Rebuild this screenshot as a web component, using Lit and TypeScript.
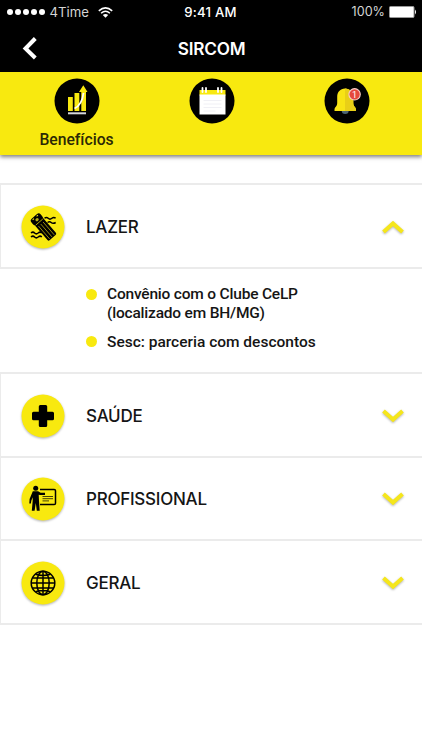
import { LitElement, html, css, svg } from "lit";
import { customElement } from "lit/decorators.js";

const statusDots = [0, 1, 2, 3, 4];

const wifi = html`<svg class="wifi" viewBox="0 0 15 11" width="15" height="11">
  <g fill="none" stroke="#fff" stroke-width="1.5">
    <path d="M.8 3.9Q7.5-2.1 14.2 3.9" /><path d="M3.1 6.2Q7.5 2.3 11.9 6.2" />
  </g>
  <path d="M4.8 8Q7.5 5.8 10.2 8L7.5 10.8z" fill="#fff" />
</svg>`;

const chart = html`<svg viewBox="0 0 46 46" width="46" height="46">
  <circle cx="23" cy="23" r="22.5" />
  <path d="M14 19h4.800v14H14zM20.500 15h4.800v18h-4.800zM27.300 14h-2.300l4.300-6.800L33.500 14H32v19h-4.700z" fill="#f8e90f" />
  <path d="M20.500 30.500C26 28 28.500 23 29.500 15" fill="none" stroke="#fff" stroke-width="1.800" />
  <path d="M14 35.300h18" stroke="#d7d8dc" stroke-width="2" />
</svg>`;

const calendar = html`<svg viewBox="0 0 46 46" width="46" height="46">
  <circle cx="23" cy="23" r="22.5" />
  <path d="M10.500 12h26v5.500h-26z" fill="#f8e90f" />
  <path d="M10.500 16.500h26v20h-26z" fill="#fff" />
  <path d="M14.500 22.500h18M14.500 26h18M14.500 29.500h18M14.500 33h12" stroke="#ececf2" stroke-width=".8" />
  <path d="M13.500 10v4M17 10v4M29 10v4M32.500 10v4" stroke="#fff" stroke-width="1.800" stroke-linecap="round" />
</svg>`;

const bell = html`<svg viewBox="0 0 46 46" width="46" height="46">
  <circle cx="23" cy="23" r="22.5" />
  <path d="M17.700 32.500h7a3.500 3.500 0 0 1-7 0z" fill="#4c6474" />
  <path d="M21 10.400c-4.800 0-7.800 3.700-7.800 8v6.600c0 3.500-2.700 4-2.700 6.700V33H32v-1.300c0-2.700-2.700-3.200-2.700-6.700v-6.600c0-4.300-3.300-8-8.300-8z" fill="#f8e415" />
  <path d="M21 10.400c5 0 8.300 3.700 8.300 8V25c0 3.500 2.700 4 2.700 6.700V33H21z" fill="#e9cf17" />
  <circle cx="30.600" cy="16.300" r="5.700" fill="#e5483d" stroke="#f6d0c8" stroke-width="1.100" />
  <text x="30.500" y="19.600" text-anchor="middle" font-family="Roboto, sans-serif" font-size="9" fill="#fff">1</text>
</svg>`;

const raft = svg`
  <g transform="translate(22.500 22) rotate(49) scale(1 1.180)">
    <path d="M-8-4.700H12.500a1.500 1.500 0 0 1 1.500 1.500v6.400a1.500 1.500 0 0 1-1.500 1.500H-8z" />
    <rect x="-14" y="-5.200" width="7.500" height="10.400" rx="2.500" />
    <path d="M-4-2.500H13M-4 .1H13M-4 2.700H13" stroke="#b8ad12" stroke-width=".7" />
    <path d="M-6.500-4v8" stroke="#f8e90f" stroke-width=".6" />
    <circle cx="-9.800" cy="0" r="1.500" fill="#b5aa15" />
    <path d="M-12.500-3v1.500M-12.500 1.500V3" stroke="#f8e90f" stroke-width="1" />
  </g>
  <g fill="none" stroke="#000" stroke-width="1.500">
    <path d="M23.500 13.300q2-1.700 3.700 0t3.700 0 3.700 0M26.500 17.500q2-1.500 3.700 0t4.500 0M10 28q2-1.700 3.600 0t3.600 0 3.600 0M10 32q2-1.700 3.600 0t3.600 0 3.600 0" />
  </g>`;

const cross = svg`<path d="M19.300 11h5.400a1.500 1.500 0 0 1 1.500 1.500v5.300h5.300a1.500 1.500 0 0 1 1.500 1.500v5.400a1.500 1.500 0 0 1-1.500 1.500h-5.300v5.300a1.500 1.500 0 0 1-1.500 1.500h-5.400a1.500 1.500 0 0 1-1.500-1.500v-5.300h-5.300a1.500 1.500 0 0 1-1.500-1.500v-5.400a1.500 1.500 0 0 1 1.500-1.500h5.300v-5.300a1.500 1.500 0 0 1 1.500-1.500z" />`;

const teacher = svg`
  <path d="M19 12.500h14.200q1.300 0 1.300 1.300v12.500q0 1.300-1.300 1.300H19" fill="none" stroke="#000" stroke-width="1.500" />
  <path d="M21.500 19.500h10.500M21.500 21.700h10.500M21.500 23.900h6.500" stroke="#453f08" stroke-width="1" />
  <circle cx="14.700" cy="11.300" r="2.500" />
  <path d="M11.800 14.300h5.300l2.500 1.500h4.400v2.100h-5l-1.300-.2.300 6 .7 10.100h-2.900l-1-7.800-1.200 7.800h-2.800l.9-10.100v-3.500l-1.400 3.500-.4 2.700H8.300l.3-4.500z" />`;

const globe = svg`<g fill="none" stroke="#000" stroke-width="1.500">
  <circle cx="22" cy="22" r="11.800" /><ellipse cx="22" cy="22" rx="6.200" ry="11.800" />
  <path d="M22 10v24M10.200 22h23.600M11.500 17h21M11.500 27h21M14.500 13.300q7.500 2.300 15 0M14.500 30.700q7.500-2.300 15 0" />
</g>`;

@customElement("app-root")
export class AppRoot extends LitElement {
  static styles = css`
    :host { display: block; height: 750px; overflow: hidden; background: #fff; color: #151515; font-family: Inter, "Liberation Sans", sans-serif; }
    * { box-sizing: border-box; }
    svg { display: block; flex: none; }
    .status { height: 24px; background: #000; color: #fff; display: grid; grid-template-columns: 1fr auto 1fr; align-items: center; padding: 0 5px 0 7px; font-size: 12.600px; line-height: 24px; }
    .carrier, .battery { display: flex; align-items: center; color: #d5d5d5; }
    .carrier { font-size: 13.200px; }
    .battery { justify-content: flex-end; gap: 4px; }
    .dots { display: flex; gap: 1.500px; margin-right: 4.500px; }
    .dot { width: 6.400px; height: 6.400px; border-radius: 50%; background: #fff; }
    .wifi { margin-left: 9px; }
    .time { font-weight: 500; font-size: 13.200px; letter-spacing: .2px; margin-left: -3px; }
    .bar { height: 48px; background: #000; color: #fff; display: grid; grid-template-columns: 60px 1fr 60px; align-items: center; }
    .back { margin-left: 22px; }
    .title { text-align: center; font-size: 17.200px; font-weight: 600; letter-spacing: -.2px; padding-left: 1px; }
    .tabs { height: 83px; background: #f8e90f; box-shadow: 0 2px 4px rgba(0, 0, 0, .5); display: grid; grid-template-columns: 153px 117px 153px; padding-top: 5.500px; }
    .tab { display: flex; flex-direction: column; align-items: center; }
    .caption { margin-top: 6px; font-family: Roboto, sans-serif; font-size: 15.700px; font-weight: 500; line-height: 20px; color: #2c2905; }
    .list { margin-top: 28px; }
    .row { height: 85.500px; border: 2px solid #ebebeb; border-right: 0; border-left-width: 1px; display: flex; align-items: center; padding: 2px 15px 0 20px; margin-bottom: -2px; }
    .row.open { height: 86px; margin-bottom: 0; padding-top: 1px; }
    .badge { filter: drop-shadow(0 1px 1px rgba(0, 0, 0, .3)); }
    .arrow { filter: drop-shadow(0 1px 1px rgba(0, 0, 0, .3)); }
    .label { flex: 1; margin-left: 21px; font-size: 17px; font-weight: 500; letter-spacing: -.25px; }
    .details { height: 103px; padding: 16px 0 0 86px; display: flex; flex-direction: column; gap: 10.500px; }
    .item { display: flex; font-family: Roboto, sans-serif; font-size: 15.500px; line-height: 18.500px; font-weight: 500; }
    .item.tight { letter-spacing: -.2px; }
    .bullet { width: 11px; height: 11px; border-radius: 50%; background: #f8e90f; margin: 3.500px 10px 0 0; flex: none; }
  `;

  private row(label: string, icon: unknown, open = false) {
    return html`<div class="row ${open ? "open" : ""}">
      <svg class="badge" viewBox="0 0 44 44" width="44" height="44"><circle cx="22" cy="22" r="21.500" fill="#f8e90f" />${icon}</svg>
      <span class="label">${label}</span>
      <svg class="arrow" viewBox="0 0 28 18" width="28" height="18">
        <path d=${open ? "M4.500 14 14 5.500 23.500 14" : "M4.500 4 14 12.500 23.500 4"} fill="none" stroke="#f5e61c" stroke-width="4" />
      </svg>
    </div>`;
  }

  render() {
    return html`
      <div class="status">
        <div class="carrier"><div class="dots">${statusDots.map(() => html`<i class="dot"></i>`)}</div><span>4Time</span>${wifi}</div>
        <span class="time">9:41 AM</span>
        <div class="battery"><span>100%</span>
          <svg width="28" height="12" viewBox="0 0 28 12"><rect x=".5" y=".5" width="24.500" height="11" rx="1" fill="#fff" stroke="#999" /><path d="M26 3.500q2 2.500 0 5z" fill="#fff" /></svg>
        </div>
      </div>
      <div class="bar">
        <svg class="back" viewBox="0 0 16 24" width="16" height="24"><path d="M13.300 2.500 3.500 12.500l9.800 9.500" fill="none" stroke="#fff" stroke-width="4" /></svg>
        <span class="title">SIRCOM</span>
      </div>
      <div class="tabs">
        <div class="tab">${chart}<span class="caption">Benefícios</span></div>
        <div class="tab">${calendar}</div>
        <div class="tab">${bell}</div>
      </div>
      <div class="list">
        ${this.row("LAZER", raft, true)}
        <div class="details">
          <div class="item tight"><i class="bullet"></i><span>Convênio com o Clube CeLP<br />(localizado em BH/MG)</span></div>
          <div class="item"><i class="bullet"></i><span>Sesc: parceria com descontos</span></div>
        </div>
        ${this.row("SAÚDE", cross)} ${this.row("PROFISSIONAL", teacher)} ${this.row("GERAL", globe)}
      </div>`;
  }
}
